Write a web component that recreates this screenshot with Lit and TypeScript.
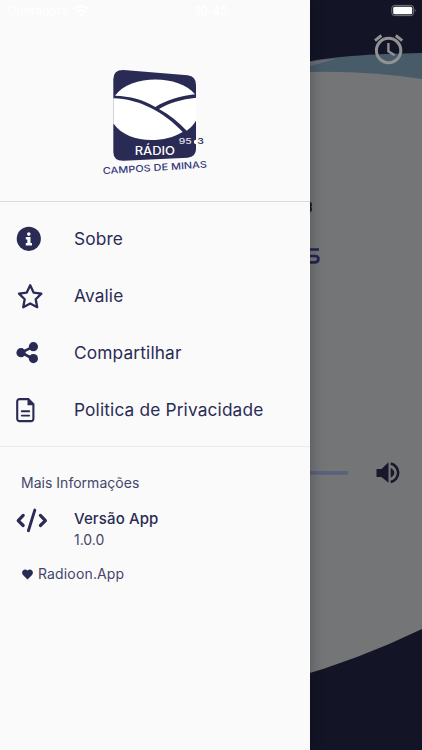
import { LitElement, html, css, svg } from "lit";
import { customElement } from "lit/decorators.js";

const icons = {
  info: svg`<circle cx="12.8" cy="11.8" r="12.1" fill="#2a2b55"/><circle cx="12.8" cy="7.1" r="1.8" fill="#fafafa"/><path d="M9.8 10h4.7v6h1.5v2.4H9.8V16h1.5v-3.6H9.8z" fill="#fafafa"/>`,
  star: svg`<path d="M14.2 1.2 17.6 8.6 25.4 9.6 19.7 15.2 21.2 23.2 14.2 19.5 7.2 23.2 8.7 15.2 3 9.6 10.8 8.6Z" fill="none" stroke="#2a2b55" stroke-width="2.3" stroke-linejoin="round"/>`,
  share: svg`<path d="M17.3 5.7 5.3 11.5 17.3 18" fill="none" stroke="#2a2b55" stroke-width="2.6"/><g fill="#2a2b55"><circle cx="17.4" cy="5.7" r="4.6"/><circle cx="5" cy="11.7" r="4.6"/><circle cx="17.4" cy="17.6" r="4.6"/></g>`,
  doc: svg`<path d="M3.6 1.1h8.7l5.1 5.2v14.4a2.4 2.4 0 0 1-2.4 2.4H3.6a2.4 2.4 0 0 1-2.4-2.4V3.5a2.4 2.4 0 0 1 2.4-2.4Z" fill="none" stroke="#2a2b55" stroke-width="2.1"/><path d="M11.5 1v6.2h6.2z" fill="#2a2b55"/><path d="M5.8 13.3h7.4M5.8 17.6h7.4" stroke="#2a2b55" stroke-width="1.9" stroke-linecap="round"/>`,
  code: svg`<g fill="none" stroke="#2a2b55" stroke-linecap="round" stroke-linejoin="round"><path d="M7.2 7.4 2.2 12.6 7.2 17.5M24.4 7.4 29.4 12.6 24.4 17.5" stroke-width="3.2"/><path d="M18.8 2.1 12.4 22.7" stroke-width="2.9"/></g>`,
};

@customElement("app-root")
export class AppRoot extends LitElement {
  static styles = css`
    :host {
      display: block;
      position: relative;
      width: 422px;
      height: 750px;
      overflow: hidden;
      background: #747577;
      color: #2a2b55;
      font-family: Inter, "Liberation Sans", sans-serif;
    }
    .player, .status { position: absolute; left: 0; top: 0; display: block; }
    .drawer {
      position: absolute;
      left: 0;
      top: 0;
      width: 310px;
      height: 750px;
      background: #fafafa;
      box-shadow: 0 0 14px rgba(0, 0, 0, 0.3);
    }
    .header {
      box-sizing: border-box;
      height: 202px;
      padding: 60px 0 0 95px;
      border-bottom: 1px solid #d9dbdc;
    }
    .header svg { display: block; overflow: visible; }
    .list {
      box-sizing: border-box;
      height: 245px;
      padding-top: 8px;
      border-bottom: 1px solid #ececed;
    }
    .row { display: flex; align-items: center; height: 57px; padding-left: 16px; }
    .row svg, .version svg { flex: none; width: 34px; height: 24px; margin-right: 24px; overflow: visible; }
    .label { font-size: 17.3px; line-height: 24px; letter-spacing: 0.15px; white-space: nowrap; }
    .more { padding: 26px 0 0 21px; font-size: 14px; line-height: 20px; letter-spacing: 0.02px; color: #45466a; }
    .version { display: flex; padding: 15px 0 0 16px; }
    .name { font-size: 15px; line-height: 22px; letter-spacing: 0.12px; font-weight: 500; }
    .number { font-size: 14px; line-height: 19px; color: #45466a; }
    .brand { display: flex; align-items: center; gap: 5px; padding: 15px 0 0 22px; font-size: 14px; line-height: 20px; letter-spacing: 0.15px; color: #45466a; }
  `;

  render() {
    return html`
      <svg class="player" width="422" height="750" viewBox="0 0 422 750">
        <path d="M0 0H422V90H0Z" fill="#131426"/>
        <path d="M290 65C330 56 370 54 422 53V90H290Z" fill="#485b69"/>
        <path d="M310 62Q322 59 336 59Q322 63 310 66Z" fill="#676b73"/>
        <path d="M290 73Q352 69 422 79V100H290Z" fill="#747577"/>
        <path d="M290 679Q358 660 422 629V750H290Z" fill="#131426"/>
        <g fill="none" stroke="#929295" stroke-width="3">
          <circle cx="388.6" cy="50.5" r="12.2"/>
          <path d="M388.4 43V51.4L394.7 55.2" stroke-width="2.4"/>
          <path d="M375 40.7 381.4 35.5M395.8 35.5 402.2 40.7"/>
        </g>
        <path d="M303 202.6H309Q311 202.6 311 204.6V205.5L310 206.8 311 208V209.6Q311 211.4 309 211.4H303" fill="none" stroke="#17182b" stroke-width="1.8"/>
        <path d="M319 249.5H309Q305 249.5 305 253T309 256H315Q318.4 256 318.4 259T315 262.3H304" fill="none" stroke="#242451" stroke-width="2.7"/>
        <path d="M290 472.8H346.5" stroke="#5b607d" stroke-width="3.8" stroke-linecap="round"/>
        <path d="M376.5 469H381.5L388.5 462.2V482.8L381.5 477H376.5Z" fill="#17182b"/>
        <path d="M390.7 468Q394.3 470 394.3 472.8T390.7 477.8Z" fill="#17182b"/>
        <path d="M390.7 463.6A9.4 9.4 0 0 1 390.7 482" fill="none" stroke="#17182b" stroke-width="2.6"/>
      </svg>

      <aside class="drawer">
        <header class="header">
          <svg width="125" height="125" viewBox="0 0 375 375">
            <path d="M55 58Q55 29 86 30L278 46Q303 49 303 75V267Q303 290 278 293L86 302Q55 303 55 276Z" fill="#2a2b55"/>
            <g fill="#fff">
              <path d="M60 107C105 44 250 42 300 103C255 108 212 122 181 141C145 119 104 108 60 107Z"/>
              <path d="M55 115C132 117 205 155 263 216C200 254 94 249 55 190Z"/>
              <path d="M304 113C260 117 220 130 192 147C225 165 252 188 275 212Q294 199 304 180Z"/>
              <circle cx="303" cy="246" r="6.5"/>
            </g>
            <text x="119" y="284" font-size="34" font-weight="500" fill="#fff" textLength="121" lengthAdjust="spacingAndGlyphs">RÁDIO</text>
            <text x="251" y="251" font-size="23" font-weight="500" fill="#e5e5f1" textLength="39" lengthAdjust="spacingAndGlyphs">95</text>
            <text x="307" y="251" font-size="23" font-weight="500" fill="#2a2b55" textLength="20" lengthAdjust="spacingAndGlyphs">3</text>
            <text transform="translate(24 343) rotate(-3.7)" font-size="28" font-weight="500" fill="#37387e" textLength="313" lengthAdjust="spacingAndGlyphs">CAMPOS DE MINAS</text>
          </svg>
        </header>
        <nav class="list">
          ${[
            ["info", "Sobre"],
            ["star", "Avalie"],
            ["share", "Compartilhar"],
            ["doc", "Politica de Privacidade"],
          ].map(([icon, label]) => html`
            <div class="row">
              <svg viewBox="0 0 34 24">${icons[icon as keyof typeof icons]}</svg>
              <span class="label">${label}</span>
            </div>`)}
        </nav>
        <div class="more">Mais Informações</div>
        <div class="version">
          <svg viewBox="0 0 34 24">${icons.code}</svg>
          <div>
            <div class="name">Versão App</div>
            <div class="number">1.0.0</div>
          </div>
        </div>
        <div class="brand">
          <svg width="11" height="11" viewBox="0 0 11 11"><path d="M5.5 10.5 1 6C-1.8 2.6 2.4-1.6 5.5 1.5C8.6-1.6 12.8 2.6 10 6Z" fill="#2a2b55"/></svg>
          <span>Radioon.App</span>
        </div>
      </aside>

      <svg class="status" width="422" height="24" viewBox="0 0 422 24">
        <g fill="#fff">
          <text x="7" y="15" font-size="12" textLength="61">Operadora</text>
          <text x="195" y="15" font-size="12" font-weight="600" textLength="33">10:45</text>
          <rect x="393.2" y="6.8" width="19" height="7.4" rx="1.5"/>
          <path d="M414.8 8.6Q416.6 10.5 414.8 12.4Z" fill="#77777f"/>
        </g>
        <g fill="none" stroke="#fff" stroke-width="2">
          <path d="M74.5 9Q81 3 87.5 9M77 12Q81 8.5 85 12"/><path d="M79.5 14 81 15.3 82.5 14"/>
        </g>
        <rect x="391.8" y="5.4" width="21.8" height="10.2" rx="2.8" fill="none" stroke="#777781"/>
      </svg>
    `;
  }
}
